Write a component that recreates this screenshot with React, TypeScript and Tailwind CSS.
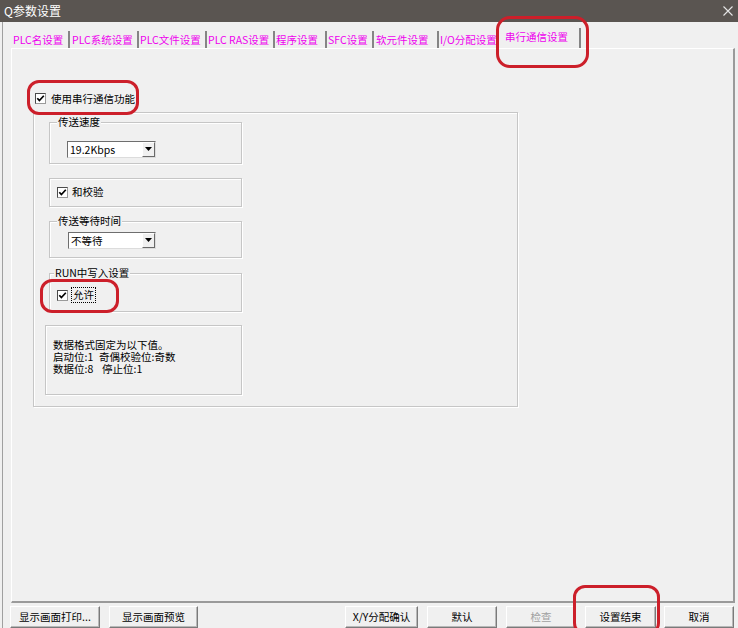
import React from "react";

const tabs: { label: string; w: number; pl: number; sep: boolean }[] = [
  { label: "PLC名设置", w: 59, pl: 2, sep: true },
  { label: "PLC系统设置", w: 69, pl: 2, sep: true },
  { label: "PLC文件设置", w: 68, pl: 1, sep: true },
  { label: "PLC RAS设置", w: 68, pl: 1, sep: true },
  { label: "程序设置", w: 52, pl: 1, sep: true },
  { label: "SFC设置", w: 47, pl: 1, sep: true },
  { label: "软元件设置", w: 65, pl: 2, sep: true },
  { label: "I/O分配设置", w: 59, pl: 1, sep: false },
];

function Check() {
  return (
    <span className="w-[11px] h-[11px] bg-white border border-t-[#4a4a4a] border-l-[#4a4a4a] border-r-[#9a9a9a] border-b-[#9a9a9a] flex items-center justify-center shrink-0">
      <svg width="9" height="9" viewBox="0 0 9 9">
        <path d="M1.3 4.2 L3.4 6.6 L7.8 1.8" stroke="#000" strokeWidth="1.7" fill="none" />
      </svg>
    </span>
  );
}

function Dropdown({ value, w }: { value: string; w: number }) {
  return (
    <div
      className="flex h-[17px] bg-white border border-t-[#6e6e6e] border-l-[#6e6e6e] border-r-[#dcdcdc] border-b-[#dcdcdc]"
      style={{ width: w }}
    >
      <span className="flex-1 pl-[2px] text-[10.5px] leading-[15px]">{value}</span>
      <span className="w-[13px] h-[15px] bg-[#f0f0f0] border border-t-white border-l-white border-r-[#6a6a6a] border-b-[#6a6a6a] flex items-center justify-center">
        <svg width="7" height="4" viewBox="0 0 7 4">
          <path d="M0 0 H7 L3.5 4 Z" fill="#000" />
        </svg>
      </span>
    </div>
  );
}

function Group({
  label,
  labelLeft,
  className,
  children,
}: {
  label?: string;
  labelLeft?: number;
  className: string;
  children?: React.ReactNode;
}) {
  return (
    <div
      className={
        "relative border border-[#c6c6c6] shadow-[inset_1px_1px_0_#ffffff,1px_1px_0_#ffffff] " +
        className
      }
    >
      {label && (
        <span
          className="absolute top-[-8px] bg-[#f0f0f0] px-[1px] text-[10.5px] leading-[14px] whitespace-nowrap"
          style={{ left: labelLeft ?? 6 }}
        >
          {label}
        </span>
      )}
      {children}
    </div>
  );
}

function Btn({ label, w, ml, disabled }: { label: string; w: number; ml: number; disabled?: boolean }) {
  return (
    <div
      className={
        "h-[22px] flex items-center justify-center bg-[#f0f0f0] border border-t-white border-l-white border-r-[#7a7a7a] border-b-[#7a7a7a] shadow-[inset_-1px_-1px_0_#b8b8b8] text-[10.5px] " +
        (disabled ? "text-[#a0a0a0]" : "text-black")
      }
      style={{ width: w, marginLeft: ml }}
    >
      {label}
    </div>
  );
}

export default function App() {
  return (
    <div className="relative w-[738px] h-[628px] overflow-hidden bg-[#f0f0f0] text-black font-['Noto_Sans_CJK_SC','Noto_Sans',sans-serif]">
      {/* title bar */}
      <div className="h-[22px] bg-[#5a5551] flex items-center justify-between pl-[4px] pr-[5px]">
        <span className="text-white text-[12px] leading-[22px]">Q参数设置</span>
        <svg width="10" height="10" viewBox="0 0 10 10">
          <path d="M0.5 0.5 L9.5 9.5 M9.5 0.5 L0.5 9.5" stroke="#e6e6e6" strokeWidth="1.1" />
        </svg>
      </div>

      {/* window body */}
      <div className="ml-[2px] border-l border-[#a0a0a0] h-[606px] flex flex-col">
        {/* tab row */}
        <div className="h-[26px] pl-[8px] flex items-end">
          {tabs.map((t) => (
            <div
              key={t.label}
              className={
                "h-[17px] flex items-center text-[10.5px] text-[#ee00ee] whitespace-nowrap " +
                (t.sep ? "border-r-2 border-[#858585]" : "")
              }
              style={{ width: t.w, paddingLeft: t.pl }}
            >
              {t.label}
            </div>
          ))}
          <div className="h-[20px] w-[83px] pl-[6px] pb-[2px] flex items-center text-[10.5px] text-[#ee00ee] border-l border-white border-r-2 border-r-[#858585] whitespace-nowrap">
            串行通信设置
          </div>
        </div>

        {/* tab page */}
        <div className="ml-[8px] w-[724px] h-[556px] border-l border-t border-white border-r-2 border-b-2 border-r-[#9a9a9a] border-b-[#9a9a9a] flex flex-col">
          <div className="mt-[43px] pl-[23px] h-[14px] flex items-center gap-[5px]">
            <Check />
            <span className="text-[10.5px] leading-[14px]">使用串行通信功能</span>
          </div>

          <div className="mt-[6px] ml-[21px] w-[485px] h-[295px] border border-[#c6c6c6] shadow-[inset_1px_1px_0_#ffffff,1px_1px_0_#ffffff] pl-[15px] flex flex-col">
            <Group label="传送速度" labelLeft={7} className="mt-[9px] w-[193px] h-[42px] pt-[18px] pl-[17px]">
              <Dropdown value="19.2Kbps" w={89} />
            </Group>

            <Group className="mt-[14px] w-[193px] h-[29px] pl-[7px] flex items-center gap-[4px]">
              <Check />
              <span className="text-[10.5px] leading-[14px]">和校验</span>
            </Group>

            <Group label="传送等待时间" labelLeft={7} className="mt-[14px] w-[193px] h-[37px] pt-[10px] pl-[18px]">
              <Dropdown value="不等待" w={88} />
            </Group>

            <Group label="RUN中写入设置" labelLeft={4} className="mt-[15px] w-[193px] h-[39px] pt-[6px] pl-[7px] flex items-center gap-[3px]">
              <Check />
              <span className="text-[10.5px] leading-[14px] border border-dotted border-black px-[1px]">允许</span>
            </Group>

            <Group className="mt-[13px] ml-[-4px] w-[197px] h-[70px] pt-[13px] pl-[7px]">
              <div className="text-[10.5px] leading-[12px] whitespace-nowrap">
                <div>数据格式固定为以下值。</div>
                <div className="flex">
                  <span className="w-[46px]">启动位:1</span>
                  <span>奇偶校验位:奇数</span>
                </div>
                <div className="flex">
                  <span className="w-[49px]">数据位:8</span>
                  <span>停止位:1</span>
                </div>
              </div>
            </Group>
          </div>
        </div>

        {/* buttons */}
        <div className="mt-[3px] pl-[7px] flex">
          <Btn label="显示画面打印..." w={90} ml={0} />
          <Btn label="显示画面预览" w={89} ml={9} />
          <Btn label="X/Y分配确认" w={73} ml={147} />
          <Btn label="默认" w={70} ml={9} />
          <Btn label="检查" w={70} ml={9} disabled />
          <Btn label="设置结束" w={71} ml={9} />
          <Btn label="取消" w={70} ml={8} />
        </div>
      </div>

      {/* red annotation marks */}
      <div className="absolute left-[496px] top-[16px] w-[93px] h-[52px] rounded-[14px] border-[3px] border-[#cc1f2a] pointer-events-none" />
      <div className="absolute left-[27px] top-[80px] w-[112px] h-[35px] rounded-[12px] border-[3px] border-[#cc1f2a] pointer-events-none" />
      <div className="absolute left-[40px] top-[279px] w-[79px] h-[34px] rounded-[12px] border-[3px] border-[#cc1f2a] pointer-events-none" />
      <div className="absolute left-[573px] top-[585px] w-[87px] h-[50px] rounded-[12px] border-[3px] border-[#cc1f2a] pointer-events-none" />
    </div>
  );
}
